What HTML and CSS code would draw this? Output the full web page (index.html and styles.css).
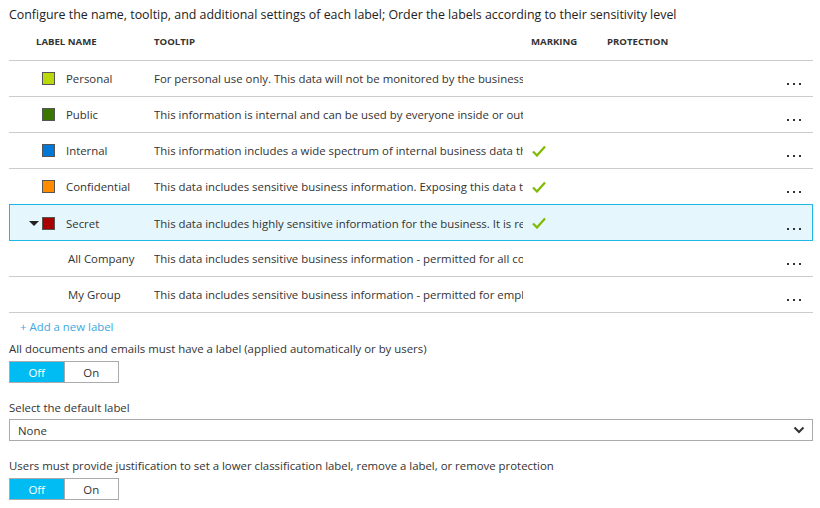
FILE: index.html
```html
<!DOCTYPE html>
<html>
<head>
<meta charset="utf-8">
<link rel="stylesheet" href="styles.css">
</head>
<body>
<div class="page">
  <div class="title">Configure the name, tooltip, and additional settings of each label; Order the labels according to their sensitivity level</div>
  <div class="table">
    <div class="head">
      <div class="h-name">LABEL NAME</div>
      <div class="h-tip">TOOLTIP</div>
      <div class="h-mark">MARKING</div>
      <div class="h-prot">PROTECTION</div>
      <div></div>
    </div>
    <div class="row">
      <div class="c-name"><span class="caret"></span><span class="sq personal"></span>Personal</div>
      <div class="c-tip">For personal use only. This data will not be monitored by the business</div>
      <div class="c-mark"></div>
      <div class="c-prot"></div>
      <div class="c-more"><i></i><i></i><i></i></div>
    </div>
    <div class="row">
      <div class="c-name"><span class="caret"></span><span class="sq public"></span>Public</div>
      <div class="c-tip">This information is internal and can be used by everyone inside or outside the business</div>
      <div class="c-mark"></div>
      <div class="c-prot"></div>
      <div class="c-more"><i></i><i></i><i></i></div>
    </div>
    <div class="row">
      <div class="c-name"><span class="caret"></span><span class="sq internal"></span>Internal</div>
      <div class="c-tip">This information includes a wide spectrum of internal business data that can be shared</div>
      <div class="c-mark"><svg class="check" width="14" height="12" viewBox="0 0 14 12"><path d="M1 6.5 L5 10.5 L13 1.5" fill="none" stroke="#7fba00" stroke-width="2.2"/></svg></div>
      <div class="c-prot"></div>
      <div class="c-more"><i></i><i></i><i></i></div>
    </div>
    <div class="row">
      <div class="c-name"><span class="caret"></span><span class="sq confidential"></span>Confidential</div>
      <div class="c-tip">This data includes sensitive business information. Exposing this data to unauthorized users</div>
      <div class="c-mark"><svg class="check" width="14" height="12" viewBox="0 0 14 12"><path d="M1 6.5 L5 10.5 L13 1.5" fill="none" stroke="#7fba00" stroke-width="2.2"/></svg></div>
      <div class="c-prot"></div>
      <div class="c-more"><i></i><i></i><i></i></div>
    </div>
    <div class="row selected">
      <div class="c-name"><span class="caret down"></span><span class="sq secret"></span>Secret</div>
      <div class="c-tip">This data includes highly sensitive information for the business. It is restricted</div>
      <div class="c-mark"><svg class="check" width="14" height="12" viewBox="0 0 14 12"><path d="M1 6.5 L5 10.5 L13 1.5" fill="none" stroke="#7fba00" stroke-width="2.2"/></svg></div>
      <div class="c-prot"></div>
      <div class="c-more"><i></i><i></i><i></i></div>
    </div>
    <div class="row">
      <div class="c-name sub">All Company</div>
      <div class="c-tip">This data includes sensitive business information - permitted for all company employees</div>
      <div class="c-mark"></div>
      <div class="c-prot"></div>
      <div class="c-more"><i></i><i></i><i></i></div>
    </div>
    <div class="row">
      <div class="c-name sub">My Group</div>
      <div class="c-tip">This data includes sensitive business information - permitted for employees of my group</div>
      <div class="c-mark"></div>
      <div class="c-prot"></div>
      <div class="c-more"><i></i><i></i><i></i></div>
    </div>
  </div>
  <div class="add">+ Add a new label</div>
  <div class="label l1">All documents and emails must have a label (applied automatically or by users)</div>
  <div class="toggle"><span class="opt on">Off</span><span class="opt">On</span></div>
  <div class="label l2">Select the default label</div>
  <div class="select"><span>None</span><svg width="12" height="8" viewBox="0 0 12 8"><path d="M1.5 1.5 L6 6 L10.5 1.5" fill="none" stroke="#333" stroke-width="2"/></svg></div>
  <div class="label l3">Users must provide justification to set a lower classification label, remove a label, or remove protection</div>
  <div class="toggle"><span class="opt on">Off</span><span class="opt">On</span></div>
</div>
</body>
</html>
```
FILE: styles.css
```css
html, body {
  margin: 0;
  padding: 0;
  background: #fff;
}
body {
  font-family: "Open Sans", "Liberation Sans", sans-serif;
  font-size: 11.4px;
  color: #333;
}
.page {
  padding: 6px 7px 0 9px;
}
.title {
  font-size: 12.4px;
  line-height: 18px;
  color: #222;
  white-space: nowrap;
}
.head, .row {
  display: grid;
  grid-template-columns: 145px 377px 76px 1fr 40px;
  align-items: center;
}
.head {
  height: 37px;
  font-size: 9.6px;
  font-weight: 700;
  color: #333;
  border-bottom: 1px solid #ccc;
  padding-bottom: 2px;
  box-sizing: border-box;
}
.h-name { padding-left: 27px; }
.row {
  height: 36px;
  border-bottom: 1px solid #ccc;
  box-sizing: border-box;
}
.row.selected {
  background: #e5f6fd;
  box-shadow: inset 0 0 0 1px #1fb6e8;
  border-bottom: none;
  margin-top: -1px;
  height: 37px;
  padding-top: 1px;
}
.c-name {
  display: flex;
  align-items: center;
  white-space: nowrap;
}
.c-name.sub { padding-left: 59px; }
.caret {
  width: 20px;
  margin-left: 13px;
  display: inline-block;
}
.caret.down {
  width: 0;
  height: 0;
  border-left: 5px solid transparent;
  border-right: 5px solid transparent;
  border-top: 5px solid #222;
  margin-left: 20px;
  margin-right: 3px;
}
.sq {
  width: 11px;
  height: 11px;
  border: 1px solid #555;
  margin-right: 11px;
  flex: none;
}
.personal { background: #bad80a; }
.public { background: #3a7600; }
.internal { background: #0078d7; }
.confidential { background: #ff8c00; }
.secret { background: #a80000; }
.c-tip {
  white-space: nowrap;
  overflow: hidden;
  margin-right: 8px;
}
.c-mark { display: flex; align-items: center; padding-left: 1px; }
.c-more {
  display: flex;
  justify-content: flex-end;
  gap: 4px;
  padding-right: 12px;
  padding-top: 11px;
}
.c-more i {
  width: 2px;
  height: 2px;
  background: #333;
}
.add {
  color: #3fa7e0;
  margin-top: 5px;
  padding-left: 11px;
  line-height: 18px;
}
.label {
  line-height: 18px;
  color: #333;
}
.label.l1 { margin-top: 4px; }
.label.l2 { margin-top: 16px; }
.label.l3 { margin-top: 16px; }
.toggle {
  display: flex;
  width: 110px;
  height: 22px;
  border: 1px solid #aaa;
  box-sizing: border-box;
  margin-top: 3px;
}
.opt {
  flex: 1;
  display: flex;
  align-items: center;
  justify-content: center;
  color: #333;
}
.opt.on {
  background: #00bcf2;
  color: #fff;
  border-right: 1px solid #aaa;
}
.select {
  margin-top: 2px;
  height: 22px;
  border: 1px solid #aaa;
  box-sizing: border-box;
  display: flex;
  align-items: center;
  justify-content: space-between;
  padding: 0 7px 0 8px;
}
```
